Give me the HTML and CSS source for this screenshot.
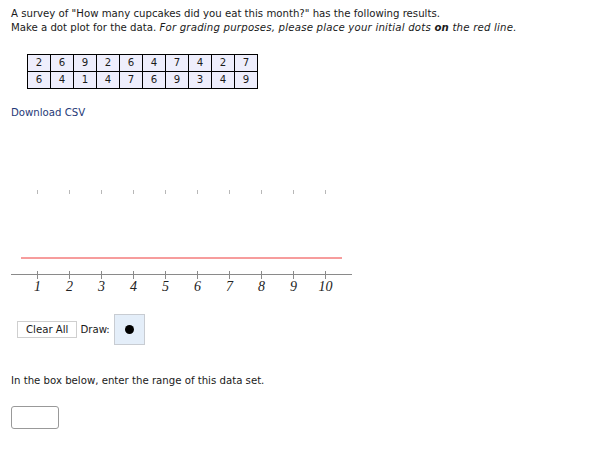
FILE: index.html
```html
<!DOCTYPE html>
<html>
<head>
  <title>Dot Plot</title>
  <link rel="stylesheet" href="styles.css">
</head>
<body>

  <div class="question">
    <p class="prompt">
      A survey of "How many cupcakes did you eat this month?" has the following results.<br>
      Make a dot plot for the data. <i>For grading purposes, please place your initial dots <b>on</b> the red line.</i>
    </p>

    <table class="data">
      <tr><td>2</td><td>6</td><td>9</td><td>2</td><td>6</td><td>4</td><td>7</td><td>4</td><td>2</td><td>7</td></tr>
      <tr><td>6</td><td>4</td><td>1</td><td>4</td><td>7</td><td>6</td><td>9</td><td>3</td><td>4</td><td>9</td></tr>
    </table>

    <a class="download" href="#">Download CSV</a>

    <svg class="plot" width="360" height="120" viewBox="0 0 360 120">
      <g class="grid">
        <line x1="37.5" y1="8" x2="37.5" y2="12"/>
        <line x1="69.5" y1="8" x2="69.5" y2="12"/>
        <line x1="101.5" y1="8" x2="101.5" y2="12"/>
        <line x1="133.5" y1="8" x2="133.5" y2="12"/>
        <line x1="165.5" y1="8" x2="165.5" y2="12"/>
        <line x1="197.5" y1="8" x2="197.5" y2="12"/>
        <line x1="229.5" y1="8" x2="229.5" y2="12"/>
        <line x1="261.5" y1="8" x2="261.5" y2="12"/>
        <line x1="293.5" y1="8" x2="293.5" y2="12"/>
        <line x1="325.5" y1="8" x2="325.5" y2="12"/>
      </g>
      <line class="red-line" x1="21" y1="76" x2="342" y2="76"/>
      <g class="axis">
        <line x1="11" y1="92.5" x2="352" y2="92.5"/>
        <line x1="37.5" y1="89" x2="37.5" y2="97"/>
        <line x1="69.5" y1="89" x2="69.5" y2="97"/>
        <line x1="101.5" y1="89" x2="101.5" y2="97"/>
        <line x1="133.5" y1="89" x2="133.5" y2="97"/>
        <line x1="165.5" y1="89" x2="165.5" y2="97"/>
        <line x1="197.5" y1="89" x2="197.5" y2="97"/>
        <line x1="229.5" y1="89" x2="229.5" y2="97"/>
        <line x1="261.5" y1="89" x2="261.5" y2="97"/>
        <line x1="293.5" y1="89" x2="293.5" y2="97"/>
        <line x1="325.5" y1="89" x2="325.5" y2="97"/>
      </g>
      <g class="labels" text-anchor="middle">
        <text x="37.5" y="109">1</text>
        <text x="69.5" y="109">2</text>
        <text x="101.5" y="109">3</text>
        <text x="133.5" y="109">4</text>
        <text x="165.5" y="109">5</text>
        <text x="197.5" y="109">6</text>
        <text x="229.5" y="109">7</text>
        <text x="261.5" y="109">8</text>
        <text x="293.5" y="109">9</text>
        <text x="325.5" y="109">10</text>
      </g>
    </svg>

    <div class="tools">
      <button class="clear">Clear All</button>
      <span class="draw-label">Draw:</span>
      <button class="dot-tool"><span class="dot"></span></button>
    </div>

    <p class="ask">In the box below, enter the range of this data set.</p>

    <input type="text" class="answer">
  </div>

</body>
</html>
```

FILE: styles.css
```css
body {
  margin: 0;
  font-family: "DejaVu Sans Condensed", "DejaVu Sans", sans-serif;
  font-size: 11.3px;
  color: #1a1a1a;
  background-color: #fff;
}

.question {
  padding: 7px 11px;
}

.prompt {
  margin: 0;
  line-height: 14px;
}

.prompt i {
  letter-spacing: 0.2px;
}

.data {
  margin: 19px 0 0 16px;
  border-collapse: collapse;
}

.data td {
  width: 22px;
  height: 16px;
  padding: 0;
  border: 1px solid #000;
  background-color: #eeeefc;
  text-align: center;
  line-height: 16px;
}

.download {
  display: block;
  margin-top: 17px;
  color: #1f3a78;
  text-decoration: none;
}

.plot {
  display: block;
  margin: 63px 0 0 -11px;
}

.grid line {
  stroke: #b8b8b8;
  stroke-width: 1;
}

.red-line {
  stroke: #ee3a3a;
  stroke-width: 1;
}

.axis line {
  stroke: #8a8a8a;
  stroke-width: 1;
}

.labels text {
  font-family: "Liberation Serif", serif;
  font-style: italic;
  font-size: 14px;
  fill: #222;
}

.tools {
  display: flex;
  align-items: center;
  gap: 3px;
  margin: 12px 0 0 6px;
}

.clear {
  height: 17px;
  padding: 0 8px;
  font-family: inherit;
  font-size: 11.3px;
  color: #1a1a1a;
  background-color: #fff;
  border: 1px solid #cfcfcf;
  border-radius: 0;
}

.draw-label {
  margin-right: 1px;
}

.dot-tool {
  display: flex;
  align-items: center;
  justify-content: center;
  width: 31px;
  height: 31px;
  padding: 0;
  background-color: #e4eef9;
  border: 1px solid #c8ccd2;
  border-radius: 0;
}

.dot {
  width: 9px;
  height: 9px;
  border-radius: 50%;
  background-color: #000;
}

.ask {
  margin: 29px 0 0;
}

.answer {
  display: block;
  box-sizing: border-box;
  width: 48px;
  height: 23px;
  margin-top: 19px;
  border: 1px solid #999;
  border-radius: 3px;
}
```
